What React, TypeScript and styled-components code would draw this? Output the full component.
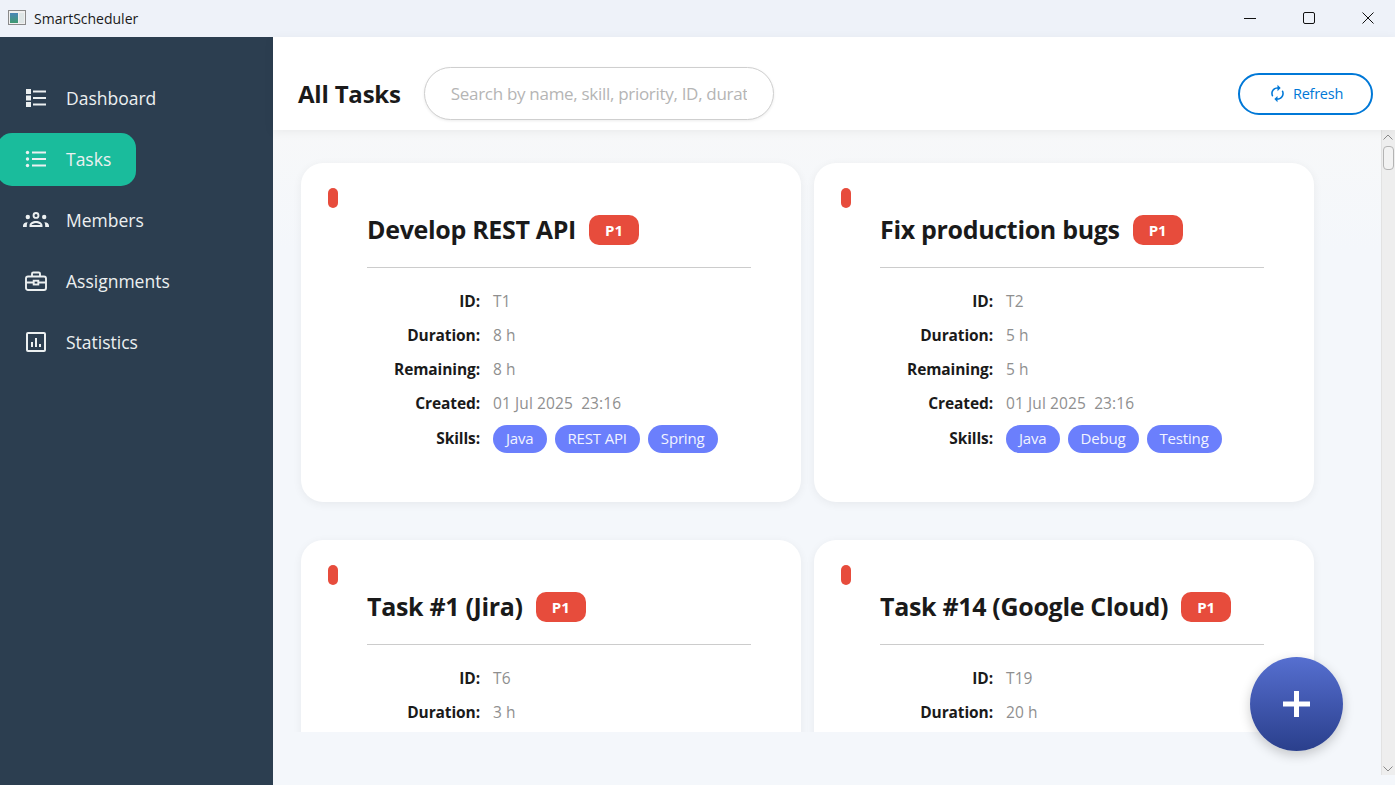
import React from 'react';
import styled, { createGlobalStyle } from 'styled-components';

const GlobalStyle = createGlobalStyle`
  html, body {
    margin: 0;
    padding: 0;
    height: 100%;
    overflow: hidden;
    background: #f4f7fb;
    font-family: "Open Sans", "Noto Sans", "Liberation Sans", sans-serif;
  }
  * { box-sizing: border-box; }
`;

const Window = styled.div`
  position: relative;
  display: flex;
  flex-direction: column;
  width: 1395px;
  height: 785px;
  overflow: hidden;
`;

const TitleBar = styled.div`
  display: flex;
  align-items: center;
  height: 37px;
  flex: none;
  padding-left: 8px;
  background: #eef2f9;
  color: #1a1a1a;
`;

const AppIcon = styled.svg`
  width: 18px;
  height: 15px;
  margin-right: 8px;
  margin-top: -2px;
`;

const AppName = styled.span`
  font-size: 14px;
`;

const WindowControls = styled.div`
  display: flex;
  margin-left: auto;
  margin-right: -2px;
`;

const WindowButton = styled.div`
  display: flex;
  align-items: center;
  justify-content: center;
  width: 59px;
  height: 37px;
  margin-top: -1px;
`;

const Body = styled.div`
  display: flex;
  flex: 1;
  min-height: 0;
`;

const Sidebar = styled.nav`
  display: flex;
  flex-direction: column;
  align-items: flex-start;
  gap: 8px;
  width: 273px;
  flex: none;
  padding-top: 35px;
  overflow: hidden;
  background: #2c3e50;
`;

const NavItem = styled.div<{ $active?: boolean }>`
  display: flex;
  align-items: center;
  gap: 19px;
  width: ${props => (props.$active ? '139px' : '100%')};
  height: 53px;
  margin-left: ${props => (props.$active ? '-3px' : '0')};
  padding: 0 0 2px ${props => (props.$active ? '28px' : '25px')};
  border-radius: 15px;
  background: ${props => (props.$active ? '#1abc9c' : 'transparent')};
  color: #ecf0f1;
  font-size: 17.5px;
  letter-spacing: 0;
`;

const NavIcon = styled.svg`
  width: 22px;
  height: 22px;
  flex: none;
`;

const Main = styled.main`
  display: flex;
  flex-direction: column;
  flex: 1;
  min-width: 0;
  background: #f4f7fb;
`;

const Header = styled.header`
  position: relative;
  z-index: 1;
  display: flex;
  align-items: center;
  height: 93px;
  flex: none;
  padding: 20px 22px 0 25px;
  background: #ffffff;
  box-shadow: 0 2px 10px rgba(0, 0, 0, 0.06);
`;

const PageTitle = styled.h1`
  margin: 0 23px 0 0;
  font-size: 24px;
  font-weight: 700;
  letter-spacing: -0.2px;
  color: #1a1a1a;
`;

const SearchBox = styled.input`
  width: 350px;
  height: 53px;
  padding: 0 26px;
  border: 1.5px solid #cfcfcf;
  border-radius: 27px;
  outline: none;
  background: #ffffff;
  box-shadow: 0 1px 3px rgba(0, 0, 0, 0.08);
  font-family: inherit;
  font-size: 17px;
  letter-spacing: -0.3px;
  color: #1a1a1a;

  &::placeholder {
    color: #b5b5b5;
    opacity: 1;
  }
`;

const RefreshButton = styled.button`
  display: flex;
  align-items: center;
  justify-content: center;
  gap: 6px;
  width: 135px;
  height: 42px;
  margin-left: auto;
  padding: 0;
  border: 2px solid #0078d7;
  border-radius: 21px;
  background: #ffffff;
  color: #0078d7;
  font-family: inherit;
  font-size: 14.5px;
  letter-spacing: -0.25px;
`;

const ContentRow = styled.div`
  display: flex;
  flex: 1;
  min-height: 0;
  padding-bottom: 10px;
`;

const ScrollPane = styled.div`
  flex: 1;
  min-width: 0;
  height: 602px;
  overflow: hidden;
  background: linear-gradient(#f7f8f9, #f4f7fb 120px);
`;

const CardGrid = styled.div`
  display: grid;
  grid-template-columns: 500px 500px;
  column-gap: 13px;
  row-gap: 38px;
  padding: 33px 0 0 28px;
`;

const Card = styled.article`
  position: relative;
  height: 339px;
  padding: 38px 50px 0 66px;
  border-radius: 22px;
  background: #ffffff;
  box-shadow: 0 2px 10px rgba(0, 0, 0, 0.06);
`;

const PriorityDot = styled.span`
  position: absolute;
  top: 25px;
  left: 27px;
  width: 10px;
  height: 20px;
  border-radius: 5px;
  background: #e74c3c;
`;

const CardHead = styled.div`
  display: flex;
  align-items: center;
  gap: 13px;
  height: 67px;
  padding-bottom: 8px;
  border-bottom: 1px solid #cccccc;
`;

const CardTitle = styled.h2`
  margin: -2px 0 0;
  font-size: 25px;
  font-weight: 700;
  letter-spacing: -0.32px;
  color: #1a1a1a;
`;

const PriorityBadge = styled.span`
  display: flex;
  align-items: center;
  justify-content: center;
  width: 50px;
  height: 30px;
  border-radius: 10px;
  background: #e74c3c;
  color: #ffffff;
  font-size: 15px;
  font-weight: 700;
`;

const Details = styled.dl`
  display: grid;
  grid-template-columns: 113px 1fr;
  grid-template-rows: repeat(4, 34px) 36px;
  column-gap: 13px;
  align-items: center;
  margin: 16px 0 0;
`;

const Label = styled.dt`
  justify-self: end;
  font-size: 15.5px;
  font-weight: 700;
  letter-spacing: -0.1px;
  color: #1a1a1a;
`;

const Value = styled.dd`
  display: flex;
  gap: 8px;
  margin: 0;
  font-size: 15.5px;
  letter-spacing: 0.1px;
  white-space: pre;
  color: #8f8f8f;
`;

const Chip = styled.span`
  display: flex;
  align-items: center;
  height: 28px;
  margin-top: 2px;
  padding: 0 13px 2px;
  border-radius: 14px;
  background: #6b7ffc;
  color: #f2f4ff;
  font-size: 15px;
  letter-spacing: -0.17px;
`;

const ScrollBar = styled.div`
  display: flex;
  flex-direction: column;
  align-items: center;
  width: 14px;
  flex: none;
  margin-left: auto;
  padding: 4px 1px 0 0;
  background: #eeeeee;
  border-left: 1px solid #e2e2e2;
`;

const ScrollArrow = styled.svg<{ $down?: boolean }>`
  width: 10px;
  height: 6px;
  flex: none;
  margin-top: ${props => (props.$down ? 'auto' : '0')};
  margin-bottom: ${props => (props.$down ? '3px' : '0')};
`;

const ScrollThumb = styled.div`
  width: 11px;
  height: 24px;
  margin-top: 6px;
  border: 1px solid #b4b4b4;
  border-radius: 4px;
  background: #f2f2f2;
`;

const Fab = styled.button`
  position: absolute;
  right: 52px;
  bottom: 34px;
  display: flex;
  align-items: center;
  justify-content: center;
  width: 93px;
  height: 94px;
  padding: 0;
  border: none;
  border-radius: 50%;
  background: linear-gradient(#566fd0, #2a3f8c);
  box-shadow: 0 4px 12px rgba(0, 0, 0, 0.2);
`;

const ICON_PROPS = {
  viewBox: '0 0 22 22',
  fill: 'none',
  stroke: '#ecf0f1',
} as const;

const DashboardIcon = () => (
  <NavIcon {...ICON_PROPS} strokeWidth={2}>
    <rect x="1" y="2" width="5" height="5" fill="#ecf0f1" stroke="none" />
    <rect x="1" y="8.5" width="5" height="5" fill="#ecf0f1" stroke="none" />
    <rect x="1" y="15" width="5" height="5" fill="#ecf0f1" stroke="none" />
    <path d="M8 4.5h13M8 11h13M8 17.5h13" />
  </NavIcon>
);

const TasksIcon = () => (
  <NavIcon {...ICON_PROPS} strokeWidth={2}>
    <circle cx="2.5" cy="4.5" r="1.7" fill="#ecf0f1" stroke="none" />
    <circle cx="2.5" cy="11" r="1.7" fill="#ecf0f1" stroke="none" />
    <circle cx="2.5" cy="17.5" r="1.7" fill="#ecf0f1" stroke="none" />
    <path d="M7 4.5h14M7 11h14M7 17.5h14" />
  </NavIcon>
);

const MembersIcon = () => (
  <NavIcon viewBox="0 0 26 22" fill="#ecf0f1" style={{ width: 26, marginLeft: -2, marginRight: -2 }}>
    <path
      fillRule="evenodd"
      d="M13 3a3.4 3.4 0 1 1 0 6.8 3.4 3.4 0 0 1 0-6.8zm0 1.9a1.5 1.5 0 1 0 0 3 1.5 1.5 0 0 0 0-3z"
    />
    <path
      fillRule="evenodd"
      d="M6.5 18v-1.6c0-2.4 3-4.4 6.5-4.4s6.5 2 6.5 4.4V18zm2-1.9h9c-.5-1.2-2.4-2.2-4.5-2.2s-4 1-4.5 2.2z"
    />
    <circle cx="4.8" cy="8" r="2.2" />
    <circle cx="21.2" cy="8" r="2.2" />
    <path d="M0 18v-1.2c0-2 1.6-3.4 4.6-3.6-.5.9-.8 2-.8 3.2V18zM26 18v-1.2c0-2-1.6-3.4-4.6-3.6.5.9.8 2 .8 3.2V18z" />
  </NavIcon>
);

const AssignmentsIcon = () => (
  <NavIcon {...ICON_PROPS} strokeWidth={1.9}>
    <path d="M7 6.5V3.8c0-.7.5-1.3 1.3-1.3h5.4c.8 0 1.3.6 1.3 1.3v2.7" />
    <rect x="1" y="6.5" width="20" height="13.5" rx="2" />
    <path d="M1 12.5h7.5M13.5 12.5H21" />
    <rect x="8.7" y="10.7" width="4.6" height="3.8" />
  </NavIcon>
);

const StatisticsIcon = () => (
  <NavIcon {...ICON_PROPS} strokeWidth={2}>
    <rect x="2" y="2" width="18" height="18" rx="1" />
    <path d="M7 11v5M11 7v9M15 13v3" />
  </NavIcon>
);

// mirrored so the top arrow points right, as in the button
const SyncIcon = () => (
  <svg width="19" height="19" viewBox="0 0 24 24" fill="#0078d7">
    <path
      transform="translate(24 0) scale(-1 1)"
      d="M12 4V1L8 5l4 4V6c3.31 0 6 2.69 6 6 0 1.01-.25 1.97-.7 2.8l1.46 1.46C19.54 15.03 20 13.57 20 12c0-4.42-3.58-8-8-8zm0 14c-3.31 0-6-2.69-6-6 0-1.01.25-1.97.7-2.8L5.24 7.74C4.46 8.97 4 10.43 4 12c0 4.42 3.58 8 8 8v3l4-4-4-4v3z"
    />
  </svg>
);

const navItems = [
  { label: 'Dashboard', icon: <DashboardIcon /> },
  { label: 'Tasks', icon: <TasksIcon />, active: true },
  { label: 'Members', icon: <MembersIcon /> },
  { label: 'Assignments', icon: <AssignmentsIcon /> },
  { label: 'Statistics', icon: <StatisticsIcon /> },
];

const tasks = [
  { title: 'Develop REST API', id: 'T1', hours: 8, skills: ['Java', 'REST API', 'Spring'] },
  { title: 'Fix production bugs', id: 'T2', hours: 5, skills: ['Java', 'Debug', 'Testing'] },
  { title: 'Task #1 (Jira)', id: 'T6', hours: 3, skills: ['Java'] },
  { title: 'Task #14 (Google Cloud)', id: 'T19', hours: 20, skills: ['Java'] },
];

const App: React.FC = () => {
  return (
    <Window>
      <GlobalStyle />
      <TitleBar>
        <AppIcon viewBox="0 0 18 15">
          <defs>
            <linearGradient id="appIconFill" x1="0" y1="0" x2="0" y2="1">
              <stop offset="0" stopColor="#4a86b8" />
              <stop offset="1" stopColor="#3f9a70" />
            </linearGradient>
          </defs>
          <rect x="0.5" y="0.5" width="17" height="14" fill="#f0f0f0" stroke="#8a8a8a" />
          <rect x="2" y="3" width="8" height="10" fill="url(#appIconFill)" />
          <rect x="11" y="3" width="5" height="10" fill="#dfe6e6" />
        </AppIcon>
        <AppName>SmartScheduler</AppName>
        <WindowControls>
          <WindowButton>
            <svg width="12" height="12" viewBox="0 0 12 12">
              <path d="M0 6.5h12" stroke="#111" strokeWidth="1" />
            </svg>
          </WindowButton>
          <WindowButton>
            <svg width="12" height="12" viewBox="0 0 12 12" fill="none">
              <rect x="0.5" y="0.5" width="11" height="11" rx="1.5" stroke="#111" />
            </svg>
          </WindowButton>
          <WindowButton>
            <svg width="12" height="12" viewBox="0 0 12 12">
              <path d="M0.5 0.5l11 11M11.5 0.5l-11 11" stroke="#111" strokeWidth="1" />
            </svg>
          </WindowButton>
        </WindowControls>
      </TitleBar>
      <Body>
        <Sidebar>
          {navItems.map(item => (
            <NavItem key={item.label} $active={item.active}>
              {item.icon}
              {item.label}
            </NavItem>
          ))}
        </Sidebar>
        <Main>
          <Header>
            <PageTitle>All Tasks</PageTitle>
            <SearchBox placeholder="Search by name, skill, priority, ID, duration..." />
            <RefreshButton>
              <SyncIcon />
              Refresh
            </RefreshButton>
          </Header>
          <ContentRow>
            <ScrollPane>
              <CardGrid>
                {tasks.map(task => (
                  <Card key={task.id}>
                    <PriorityDot />
                    <CardHead>
                      <CardTitle>{task.title}</CardTitle>
                      <PriorityBadge>P1</PriorityBadge>
                    </CardHead>
                    <Details>
                      <Label>ID:</Label>
                      <Value>{task.id}</Value>
                      <Label>Duration:</Label>
                      <Value>{task.hours} h</Value>
                      <Label>Remaining:</Label>
                      <Value>{task.hours} h</Value>
                      <Label>Created:</Label>
                      <Value>01 Jul 2025  23:16</Value>
                      <Label>Skills:</Label>
                      <Value>
                        {task.skills.map(skill => (
                          <Chip key={skill}>{skill}</Chip>
                        ))}
                      </Value>
                    </Details>
                  </Card>
                ))}
              </CardGrid>
            </ScrollPane>
            <ScrollBar>
              <ScrollArrow viewBox="0 0 10 6" fill="none">
                <path d="M0.5 5.5L5 1l4.5 4.5" stroke="#8a8a8a" />
              </ScrollArrow>
              <ScrollThumb />
              <ScrollArrow $down viewBox="0 0 10 6" fill="none">
                <path d="M0.5 0.5L5 5l4.5-4.5" stroke="#8a8a8a" />
              </ScrollArrow>
            </ScrollBar>
          </ContentRow>
        </Main>
      </Body>
      <Fab aria-label="Add task">
        <svg width="27" height="26" viewBox="0 0 27 26">
          <path d="M13.5 0v26M0 13h27" stroke="#ffffff" strokeWidth="5" />
        </svg>
      </Fab>
    </Window>
  );
};

export default App;
